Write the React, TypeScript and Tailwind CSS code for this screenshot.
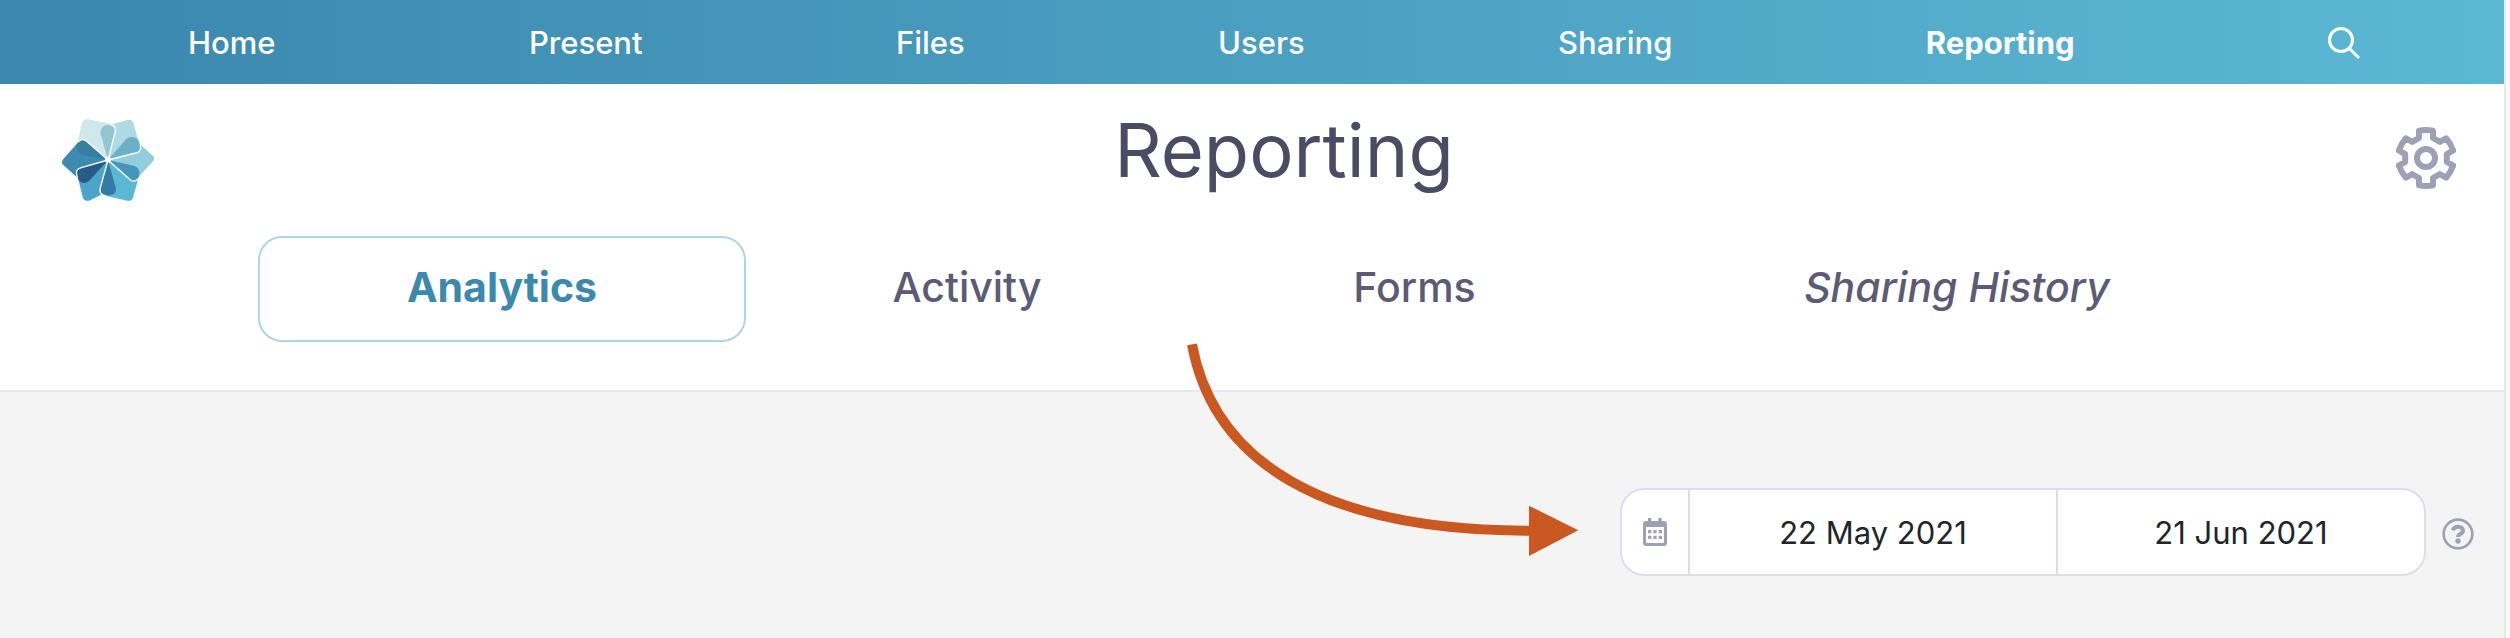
const NAV = ['Home', 'Present', 'Files', 'Users', 'Sharing', 'Reporting']

function SearchIcon() {
  return (
    <svg className="h-8 w-8" viewBox="0 0 32 32" fill="none" stroke="currentColor" strokeWidth="3">
      <circle cx="13" cy="13" r="11.5" />
      <path d="M21.5 21.5 31 31" />
    </svg>
  )
}

function Logo() {
  return (
    <svg className="h-[120px] w-[132px]" viewBox="0 -6 396 360">
      {/* Petals */}
      <path fill="#d0e8ec" d="M204 180 108 143 126 70Q130 55 145 58L212 72 226 90Z" />
      <path fill="#aedae3" d="M204 180 212 74 262 60Q277 56 281 71L300 140 296 158Z" />
      <path fill="#90cedd" d="M204 180 300 133 337 166Q347 175 338 185L287 240 272 240Z" />
      <path fill="#5ab8d3" d="M204 180 295 235 280 290Q276 305 262 302L195 287 182 270Z" />
      <path fill="#4aa5c8" d="M204 180 182 285 147 302Q132 305 128 291L112 225Z" />
      <path fill="#3d8bb0" d="M204 180 140 125Q127 113 116 125L70 177Q61 187 71 196L112 233Z" />
      {/* Overlaps */}
      <path fill="#92c5d0" d="M204 180 182 102C176 66 232 68 225 96Z" />
      <path fill="#6bb0c7" d="M204 180 258 118C272 104 296 112 298 128Q304 155 293 156Z" />
      <path fill="#4596ba" d="M204 180 281 197C297 201 300 216 297 230Q284 250 270 238Z" />
      <path fill="#357aa7" d="M204 180 227 262C231 278 221 286 206 286Q176 286 181 268Z" />
      <path fill="#255b88" d="M204 180 150 240C138 254 119 250 115 238Q105 210 118 206Z" />
      <path fill="#367f9f" d="M204 180 130 165Q109 160 108 136L118 123Q127 114 138 124Z" />
      {/* Edges */}
      <g fill="none" stroke="#fff" strokeWidth="4" strokeLinecap="round">
        <path d="M204 180 225 98Q230 78 212 74" />
        <path d="M204 180 288 159Q306 155 301 136" />
        <path d="M204 180 268 237Q281 250 294 237" />
        <path d="M204 180 181 263Q175 283 197 287" />
        <path d="M204 180 124 203Q105 208 110 224L112 232" />
        <path d="M204 180 140 124Q127 113 115 125" />
      </g>
      <circle cx="204" cy="179" r="9" fill="#fff" />
    </svg>
  )
}

function GearIcon() {
  return (
    <svg
      className="h-[62px] w-[60px]"
      viewBox="-90 -93 180 186"
      fill="none"
      stroke="currentColor"
      strokeWidth="18"
      strokeLinejoin="round"
    >
      <path d="M-21-60V-82Q0-86 21-82V-60L41.5-48.2 60.5-59.2Q74.5-43 81.5-22.8L62.5-11.8V11.8L81.5 22.8Q74.5 43 60.5 59.2L41.5 48.2 21 60V82Q0 86-21 82V60L-41.5 48.2-60.5 59.2Q-74.5 43-81.5 22.8L-62.5 11.8V-11.8L-81.5-22.8Q-74.5-43-60.5-59.2L-41.5-48.2Z" />
      <circle r="27" />
    </svg>
  )
}

function CalendarIcon() {
  return (
    <svg className="h-7 w-6" viewBox="0 0 72 84" fill="currentColor">
      <path
        fillRule="evenodd"
        d="M15 0h10v9h21V0h10v9h7q9 0 9 9v57q0 9-9 9H9q-9 0-9-9V18q0-9 9-9h6ZM9 27v45q0 3 3 3h48q3 0 3-3V27Z"
      />
      <path d="M15 36h10v10H15zM31 36h10v10H31zM47 36h10v10H47zM15 53h10v10H15zM31 53h10v10H31zM47 53h10v10H47z" />
    </svg>
  )
}

function HelpIcon() {
  return (
    <svg className="h-8 w-8" viewBox="0 0 96 96" fill="none" stroke="currentColor">
      <circle cx="48" cy="48" r="43" strokeWidth="8" />
      <path d="M32 37C38 23 63 23 63 38C63 49 48 47 48 57" strokeWidth="12" />
      <circle cx="48" cy="69" r="8" fill="currentColor" stroke="none" />
    </svg>
  )
}

function Arrow() {
  return (
    <svg
      className="pointer-events-none absolute right-full -bottom-1 mr-5 h-[260px] w-[440px]"
      viewBox="0 0 1320 780"
      fill="none"
    >
      <path d="M96 73C160 420 480 632 1110 632" stroke="#c95821" strokeWidth="30" />
      <path d="M1107 557 1255 631 1107 708Z" fill="#c95821" />
    </svg>
  )
}

export default function App() {
  return (
    <div className="min-h-screen bg-[#f9f9f9] pr-1 font-['Inter',sans-serif]">
      <div className="flex min-h-screen flex-col border-r-2 border-[#e7e7e7] bg-[#f4f4f4]">
        <nav className="flex h-[84px] items-center justify-between bg-linear-to-r from-[#3b87ae] to-[#5bb8d4] pt-0.5 pr-36 pl-[188px] text-[31px] font-medium text-white">
          {NAV.map((item) => (
            <a key={item} href="#" className={item === 'Reporting' ? 'font-bold' : ''}>
              {item}
            </a>
          ))}
          <button aria-label="Search">
            <SearchIcon />
          </button>
        </nav>

        <header className="border-b-2 border-[#e6e6ef] bg-white pb-12">
          <div className="mb-1 flex h-[148px] items-center pr-12 pl-10">
            <a href="#" aria-label="Dashboard">
              <Logo />
            </a>
            <h1 className="flex-1 pb-4 text-center text-[74px] leading-none text-[#4b4b64]">Reporting</h1>
            <button aria-label="Settings" className="text-[#9f9fb5]">
              <GearIcon />
            </button>
          </div>

          {/* Report tabs */}
          <div className="grid h-[106px] grid-cols-[488fr_442fr_453fr_632fr] pr-[231px] pl-[258px] text-[41px] font-medium text-[#5b5b75]">
            <button className="rounded-3xl border-2 border-[#aed6e1] pb-0.5 font-bold text-[#3b8aae]">Analytics</button>
            <button className="pb-0.5">Activity</button>
            <button className="pb-0.5">Forms</button>
            <button className="pb-0.5 italic">Sharing History</button>
          </div>
        </header>

        <main className="flex items-center justify-end gap-4 pt-24 pr-[30px]">
          <div className="relative">
            <div className="flex h-[88px] overflow-hidden rounded-3xl border-2 border-[#dedeea] bg-white text-[31px] text-[#212529]">
              <span className="flex w-[66px] items-center justify-center text-[#9f9fb5]">
                <CalendarIcon />
              </span>
              <input
                aria-label="Start date"
                defaultValue="22 May 2021"
                className="w-[368px] border-l-2 border-[#dedeea] pt-0.5 text-center outline-none"
              />
              <input
                aria-label="End date"
                defaultValue="21 Jun 2021"
                className="w-[368px] border-l-2 border-[#dedeea] pt-0.5 text-center outline-none"
              />
            </div>
            <Arrow />
          </div>
          <button aria-label="Help" className="pt-1 text-[#9f9fb5]">
            <HelpIcon />
          </button>
        </main>
      </div>
    </div>
  )
}
